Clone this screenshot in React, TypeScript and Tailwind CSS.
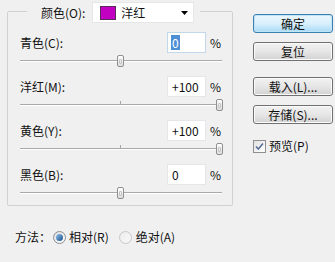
import React from 'react'

const font = "font-['Noto_Sans_CJK_SC','Liberation_Sans',sans-serif]"

const Slider = ({ value }: { value: number }) => {
  // thumb centre runs from ~2.5px to ~199.5px across the 202px track
  const left = 100.5 + value * 0.985 - 3.5
  return (
    <div className="relative h-[16px] flex items-center">
      <div className="w-full h-[2px] border-t border-[#a9a9a9] bg-white" />
      <div className="absolute left-[100px] top-[4px] w-px h-[3px] bg-[#a6a6a6]" />
      <div
        className="absolute top-[2px] w-[7px] h-[12px] rounded-[2px] border border-[#8f9091] bg-gradient-to-b from-white to-[#dcdcdc] flex items-center justify-center"
        style={{ left }}
      >
        <div className="w-[3px] h-[5px] border border-[#c4c4c4] rounded-[1px]" />
      </div>
    </div>
  )
}

const Row = ({
  label,
  value,
  slider,
  focused,
}: {
  label: string
  value: string
  slider: number
  focused?: boolean
}) => (
  <div className="flex flex-col">
    <div className="flex items-center h-[21px]">
      <span className="flex-1">{label}</span>
      <div
        className={
          focused
            ? 'w-[39px] h-[21px] bg-white border border-[#c3d6ea] flex items-center pl-[3px]'
            : 'w-[39px] h-[21px] bg-white border border-[#e4e6ea] flex items-center pl-[4px]'
        }
      >
        {focused ? (
          <span className="bg-[#4f8fd6] text-white px-[1px] leading-[15px]">{value}</span>
        ) : (
          <span>{value}</span>
        )}
      </div>
      <span className="ml-[4px] w-[12px]">%</span>
    </div>
    <Slider value={slider} />
  </div>
)

const Button = ({ children, primary }: { children: React.ReactNode; primary?: boolean }) => (
  <button
    className={
      primary
        ? 'w-[80px] h-[19px] rounded-[3px] border border-[#3c7fb1] bg-gradient-to-b from-[#eaf6fd] via-[#d9f0fc] to-[#a7d9f5] shadow-[0_0_0_1px_#bfe3f7_inset] flex items-center justify-center leading-none'
        : 'w-[80px] h-[19px] rounded-[3px] border border-[#707070] bg-gradient-to-b from-[#f2f2f2] via-[#e6e6e6] to-[#d2d2d2] shadow-[0_0_0_1px_#fbfbfb_inset] flex items-center justify-center leading-none'
    }
  >
    {children}
  </button>
)

export default function App() {
  return (
    <div className={`w-[335px] h-[262px] bg-[#f0f0f0] flex text-[12px] text-[#111] ${font}`}>
      <div className="ml-[7px] w-[226px] flex flex-col">
        <fieldset className="border border-[#cfd2d4] rounded-[2px] pl-[12px] pr-[10px] pt-[9px] pb-[4px]">
          <legend className="ml-[7px] pl-[14px] pr-[6px] pt-[2px]">
            <div className="flex items-center gap-[7px]">
              <span>颜色(O):</span>
              <div className="w-[102px] h-[21px] bg-white border border-[#e6e6e6] flex items-center pl-[7px] pr-[5px]">
                <div className="w-[16px] h-[14px] bg-[#c200c2] border border-[#5a2a5a]" />
                <span className="ml-[5px]">洋红</span>
                <svg className="ml-auto" width="7" height="4" viewBox="0 0 7 4">
                  <path d="M0 0h7L3.5 4z" fill="#000" />
                </svg>
              </div>
            </div>
          </legend>
          <div className="flex flex-col gap-[7px]">
            <Row label="青色(C):" value="0" slider={0} focused />
            <Row label="洋红(M):" value="+100" slider={100} />
            <Row label="黄色(Y):" value="+100" slider={100} />
            <Row label="黑色(B):" value="0" slider={0} />
          </div>
        </fieldset>
        <div className="mt-[23px] pl-[8px] flex items-center h-[16px]">
          <span>方法：</span>
          <div className="ml-[2px] w-[13px] h-[13px] rounded-full border border-[#8a8e94] bg-gradient-to-br from-[#dcdcdc] to-white flex items-center justify-center">
            <div className="w-[7px] h-[7px] rounded-full bg-gradient-to-br from-[#8ec2ec] to-[#1c4f8c]" />
          </div>
          <span className="ml-[3px]">相对(R)</span>
          <div className="ml-[10px] w-[13px] h-[13px] rounded-full border border-[#c6c8cc] bg-gradient-to-br from-[#ececec] to-[#f8f8f8]" />
          <span className="ml-[4px]">绝对(A)</span>
        </div>
      </div>
      <div className="ml-[20px] w-[80px] flex flex-col pt-[14px]">
        <Button primary>确定</Button>
        <div className="mt-[9px]">
          <Button>复位</Button>
        </div>
        <div className="mt-[16px]">
          <Button>载入(L)...</Button>
        </div>
        <div className="mt-[9px]">
          <Button>存储(S)...</Button>
        </div>
        <div className="mt-[13px] flex items-center">
          <div className="w-[13px] h-[13px] border border-[#8f8f8f] bg-gradient-to-br from-[#e2e2e2] to-white flex items-center justify-center">
            <svg width="9" height="9" viewBox="0 0 9 9">
              <path d="M1 4.5l2.3 2.5L8 1.5" stroke="#5a6f96" strokeWidth="1.6" fill="none" />
            </svg>
          </div>
          <span className="ml-[3px]">预览(P)</span>
        </div>
      </div>
    </div>
  )
}
